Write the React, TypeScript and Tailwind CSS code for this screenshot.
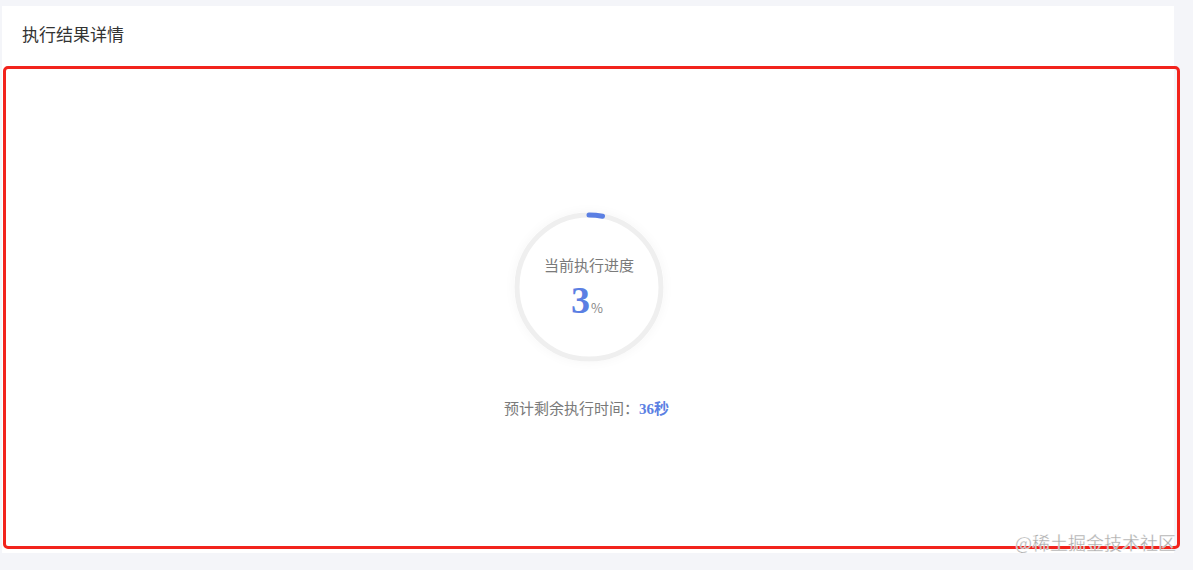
const CIRC = 2 * Math.PI * 72

const ProgressRing = ({ percent }: { percent: number }) => {
  const done = (CIRC * percent) / 100
  return (
    <div className="relative w-[150px] h-[150px] rounded-full shadow-[0_0_12px_rgba(0,0,0,0.04)] -ml-[5px]">
      <svg width="150" height="150" viewBox="0 0 150 150" className="-rotate-90">
        <circle cx="75" cy="75" r="72" fill="none" stroke="#efefef" strokeWidth="5" />
        <circle
          cx="75"
          cy="75"
          r="72"
          fill="none"
          stroke="#5b7fe3"
          strokeWidth="5"
          strokeLinecap="round"
          strokeDasharray={`${done} ${CIRC}`}
        />
      </svg>
      <div className="absolute inset-0 flex flex-col items-center pt-[43px]">
        <div className="text-[15px] leading-5 text-[#7a7a7a]">当前执行进度</div>
        <div className="flex items-baseline mt-[8px] -ml-[4px]">
          <span className="font-['Liberation_Serif',serif] font-bold text-[38px] leading-[34px] text-[#5b7fe3]">3</span>
          <span className="text-[13px] text-[#888] ml-[1px]">%</span>
        </div>
      </div>
    </div>
  )
}

const App = () => {
  return (
    <div className="w-[1193px] h-[570px] bg-[#f4f5f9] pt-[6px] pl-[2px] font-['Noto_Sans_CJK_SC','Noto_Sans',sans-serif] relative overflow-hidden">
      <div className="w-[1172px] h-[547px] bg-white flex flex-col">
        <div className="h-[60px] flex items-center pl-[20px] pb-[4px] text-[17px] text-[#333]">执行结果详情</div>
        <div className="ml-[1px] w-[1177px] h-[483px] border-[3px] border-[#f2231c] rounded-[5px] flex flex-col items-center pt-[143px]">
          <ProgressRing percent={3} />
          <div className="mt-[36px] text-[15px] leading-5 text-[#7a7a7a] -ml-[10px]">
            预计剩余执行时间：
            <span className="font-['Liberation_Serif','Noto_Sans_CJK_SC',serif] font-bold text-[15px] text-[#5b7fe3]">36秒</span>
          </div>
        </div>
      </div>
      <div className="absolute right-[17px] top-[530px] text-[18px] leading-6 text-[#a9a9a9] [-webkit-text-stroke:0.3px_#fff]">
        @稀土掘金技术社区
      </div>
    </div>
  )
}

export default App
